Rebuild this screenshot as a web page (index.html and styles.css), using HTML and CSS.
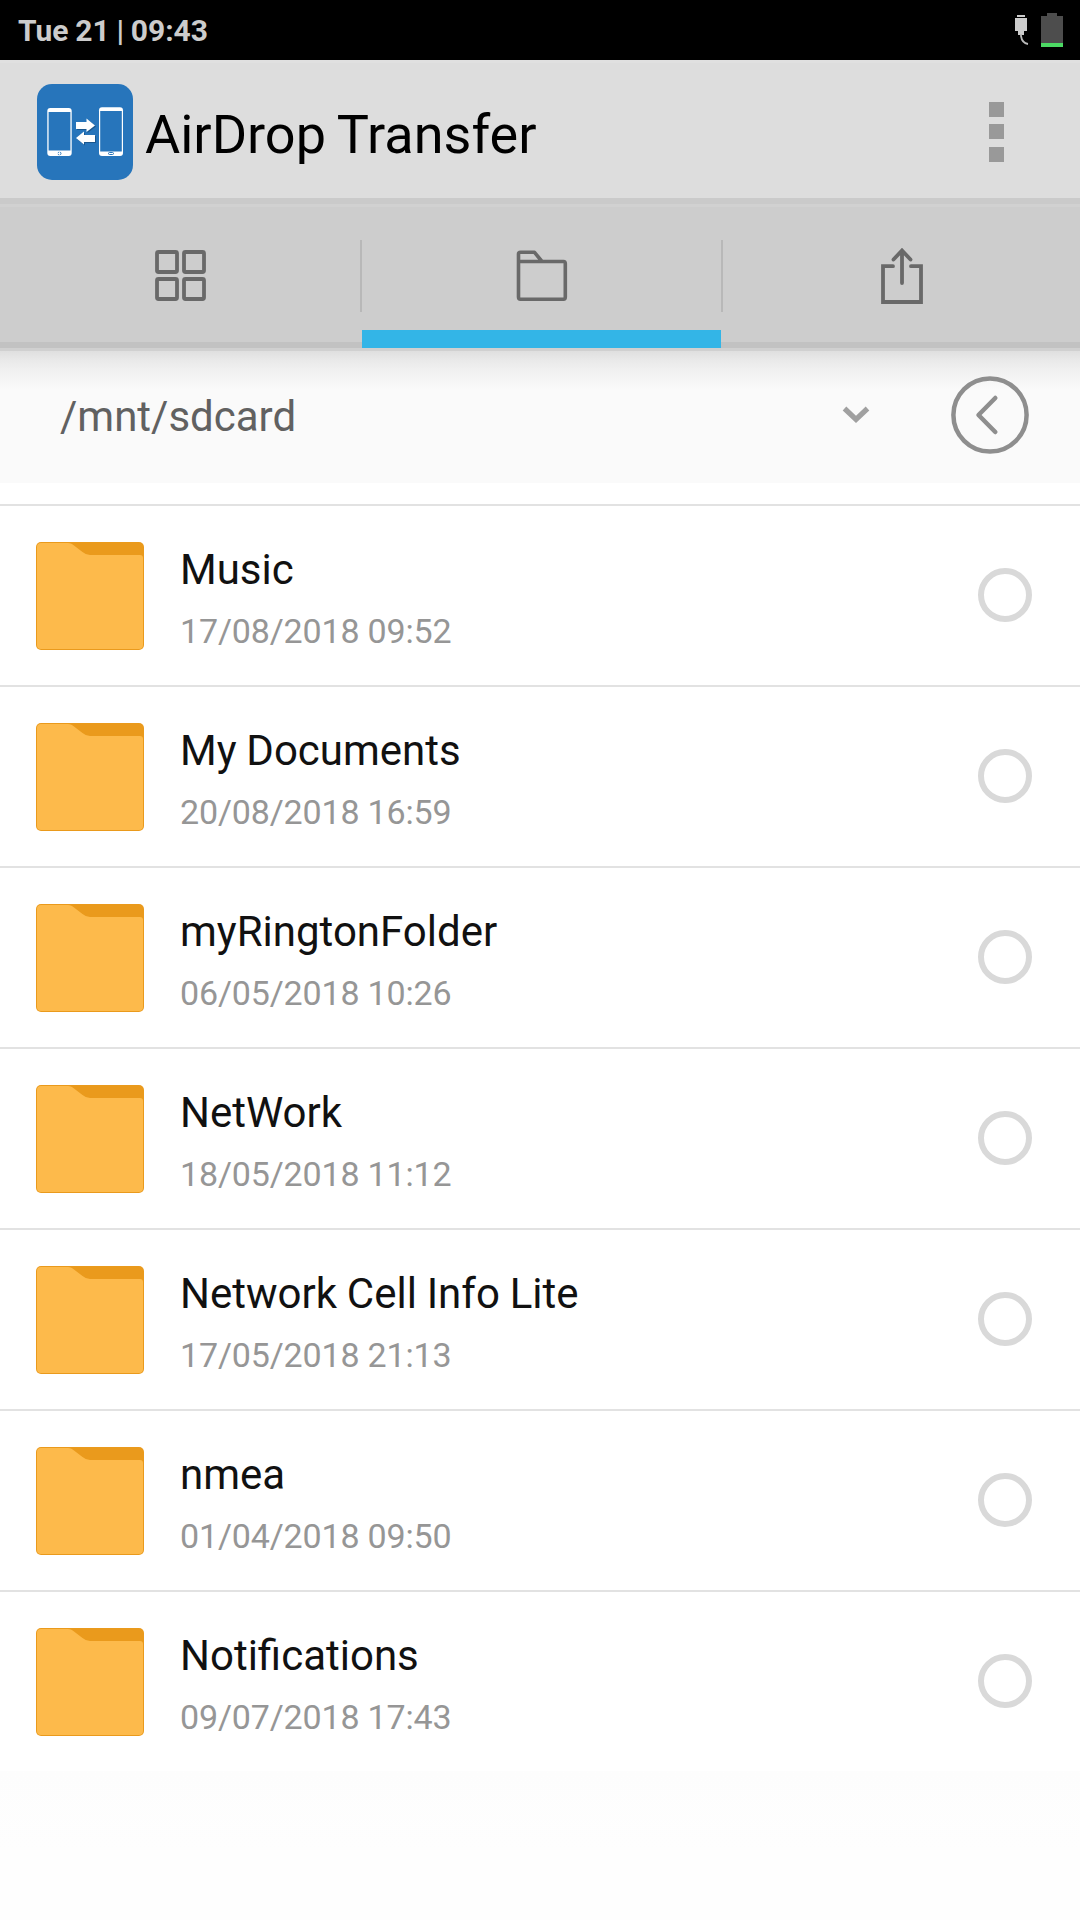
FILE: index.html
```
<!DOCTYPE html>
<html lang="en">
<head>
<meta charset="utf-8">
<title>AirDrop Transfer</title>
<link rel="stylesheet" href="styles.css">
</head>
<body>
<svg class="defs" width="0" height="0" aria-hidden="true">
  <symbol id="folder" viewBox="0 0 108 108">
    <rect width="108" height="108" rx="5" fill="#ea9a1c"/>
    <path d="M5 1H32C35 1 36 2 38 3.500L46.500 10Q50 13 54 13H104Q107 13 107 16V103Q107 107 103 107H5Q1 107 1 103V5Q1 1 5 1Z" fill="#fdba4b"/>
  </symbol>
</svg>
<div class="status">
  <span class="clock">Tue 21 | 09:43</span>
  <svg class="status-icons" width="48" height="34" viewBox="0 0 48 34">
    <path d="M2 2h8v2H2zM0 5h12v13H9v4H3v-4H0z" fill="#ccc"/>
    <path d="M6 21v2q1 7 7 8" fill="none" stroke="#bbb" stroke-width="1.800"/>
    <path d="M32 0h10v3h6v27H26V3h6z" fill="#4d4d4d"/>
    <path d="M26 30h22v4H26z" fill="#4cd964"/>
  </svg>
</div>
<header class="header">
  <svg class="logo" width="96" height="96" viewBox="0 0 96 96">
    <rect width="96" height="96" rx="15" fill="#2775bb"/>
    <rect x="10.300" y="24" width="24.400" height="48" rx="3" fill="#fff"/>
    <rect x="11.600" y="28" width="21.800" height="38.500" fill="#2775bb"/>
    <circle cx="22.500" cy="69.500" r="1.500" fill="none" stroke="#2775bb" stroke-dasharray="1.500 .8"/>
    <rect x="62" y="23.300" width="24" height="48.700" rx="3" fill="#fff"/>
    <rect x="63.200" y="27" width="21.600" height="40.500" fill="#2775bb"/>
    <rect x="71.500" y="68.500" width="5" height="2" rx="1" fill="none" stroke="#2775bb"/>
    <g fill="#174b7b" opacity=".7" transform="translate(1 1)"><path d="M39 38h10.500v-3.500L58 41.500l-8.500 6.500v-3H39z"/><path d="M58 51H47v-3.500L39 54l8 6.500V58h11z"/></g>
    <g fill="#fff"><path d="M39 38h10.500v-3.500L58 41.500l-8.500 6.500v-3H39z"/><path d="M58 51H47v-3.500L39 54l8 6.500V58h11z"/></g>
  </svg>
  <h1 class="app-name">AirDrop Transfer</h1>
  <svg class="overflow" width="15" height="60" viewBox="0 0 15 60" fill="#999"><path d="M0 0h15v15H0zM0 22h15v15H0zM0 45h15v15H0z"/></svg>
</header>
<nav class="tabs">
  <div class="tab tab-apps">
    <svg width="52" height="52" viewBox="0 0 52 52" fill="none" stroke="#696969" stroke-width="3.800"><rect x="2" y="2" width="20" height="20" rx="1.500"/><rect x="29" y="2" width="20" height="20" rx="1.500"/><rect x="2" y="29" width="20" height="20" rx="1.500"/><rect x="29" y="29" width="20" height="20" rx="1.500"/></svg>
  </div>
  <i class="divider"></i>
  <div class="tab tab-active">
    <svg width="52" height="52" viewBox="0 0 52 52" fill="none" stroke="#696969" stroke-width="3.600" stroke-linejoin="round"><path d="M2.500 11.500V4Q2.500 2.300 4.500 2.300H18.500L26 11.500M2.500 11.500H47.500Q49.300 11.500 49.300 13.500V47Q49.300 49.300 47.500 49.300H4.500Q2.500 49.300 2.500 47Z"/></svg>
  </div>
  <i class="divider"></i>
  <div class="tab">
    <svg width="42" height="56" viewBox="0 0 42 56" fill="none" stroke="#696969" stroke-width="3.800" stroke-linecap="round"><path d="M12 18.200H2V54H40V18.200H30M21 35V3M12.500 11.500L21 2.500L29.500 11.500"/></svg>
  </div>
</nav>
<div class="path-bar">
  <span class="path">/mnt/sdcard</span>
  <svg class="caret" width="28" height="18" viewBox="0 0 28 18" fill="none" stroke="#a0a0a0" stroke-width="5.200"><path d="M2.500 2.500L14 13.500L25.500 2.500"/></svg>
  <svg class="back" width="78" height="78" viewBox="0 0 78 78" fill="none" stroke="#8e8e8e" stroke-width="4.500" stroke-linecap="round" stroke-linejoin="round"><circle cx="39" cy="39" r="36.600"/><path d="M44.300 22L27.500 39L44.300 56"/></svg>
</div>
<ul class="list">
  <li class="row"><svg class="folder"><use href="#folder"/></svg><div class="info"><div class="name">Music</div><div class="date">17/08/2018 09:52</div></div><i class="radio"></i></li>
  <li class="row"><svg class="folder"><use href="#folder"/></svg><div class="info"><div class="name">My Documents</div><div class="date">20/08/2018 16:59</div></div><i class="radio"></i></li>
  <li class="row"><svg class="folder"><use href="#folder"/></svg><div class="info"><div class="name">myRingtonFolder</div><div class="date">06/05/2018 10:26</div></div><i class="radio"></i></li>
  <li class="row"><svg class="folder"><use href="#folder"/></svg><div class="info"><div class="name">NetWork</div><div class="date">18/05/2018 11:12</div></div><i class="radio"></i></li>
  <li class="row"><svg class="folder"><use href="#folder"/></svg><div class="info"><div class="name">Network Cell Info Lite</div><div class="date">17/05/2018 21:13</div></div><i class="radio"></i></li>
  <li class="row"><svg class="folder"><use href="#folder"/></svg><div class="info"><div class="name">nmea</div><div class="date">01/04/2018 09:50</div></div><i class="radio"></i></li>
  <li class="row"><svg class="folder"><use href="#folder"/></svg><div class="info"><div class="name">Notifications</div><div class="date">09/07/2018 17:43</div></div><i class="radio"></i></li>
</ul>
<div class="footer-fill"></div>
</body>
</html>
```
FILE: styles.css
```
* { box-sizing: border-box; }
body {
  margin: 0;
  width: 1080px;
  height: 1920px;
  overflow: hidden;
  display: flex;
  flex-direction: column;
  background: #fefefe;
  font-family: Roboto, sans-serif;
}
svg { display: block; flex: none; }
.defs { position: absolute; }
.status {
  height: 60px;
  padding: 0 17px 0 18px;
  display: flex;
  justify-content: space-between;
  background: #000;
}
.clock { font-size: 30px; line-height: 61px; font-weight: 700; word-spacing: -0.7px; color: #ccc; }
.status-icons { margin-top: 13px; }
.header {
  height: 138px;
  padding: 21px 76px 0 37px;
  display: flex;
  align-items: flex-start;
  border-top: 3px solid #e0e0e0;
  background: #ddd;
}
.app-name { margin: 21px 0 0 12px; font-size: 54px; line-height: 60px; font-weight: 400; word-spacing: -1.5px; color: #000; }
.overflow { margin: 18px 0 0 auto; }
.tabs {
  height: 153px;
  display: flex;
  background: linear-gradient(#cacaca 6px, #d1d1d1 6px 9px, #cdcdcd 9px 144px, #c2c2c2 144px 150px, #d0d0d0 150px);
}
.tab {
  flex: none;
  width: 360px;
  height: 150px;
  padding-top: 5px;
  display: flex;
  align-items: center;
  justify-content: center;
}
.tab-apps { padding-left: 2px; }
.tab:last-child { width: 357px; padding-top: 6px; }
.tab-active { width: 359px; padding-top: 23px; border-bottom: 18px solid #33b5e7; }
.divider { width: 2px; height: 72px; margin-top: 42px; background: #b8b8b8; }
.path-bar {
  height: 132px;
  padding: 0 51px 4px 60px;
  display: flex;
  align-items: center;
  background: linear-gradient(#dfdfdf, #e9e9e9 9px, #f1f1f1 20px, #fafafa 38px);
}
.path { margin-top: 4px; font-size: 42px; line-height: 50px; color: #616161; }
.caret { margin-left: auto; }
.back { margin-left: 81px; }
.list { margin: 0; padding: 21px 0 0; list-style: none; background: #fff; }
.row {
  height: 181px;
  padding: 0 48px 0 36px;
  display: flex;
  align-items: center;
  border-top: 2px solid #e2e2e2;
}
.folder { width: 108px; height: 108px; margin-top: 1px; }
.info { flex: 1; margin: 5px 0 0 36px; }
.name { font-size: 42px; line-height: 50px; word-spacing: -0.6px; color: #111; }
.date { margin-top: 16px; font-size: 34px; line-height: 40px; letter-spacing: -0.16px; color: #969696; }
.radio { width: 54px; height: 54px; margin-top: -1px; border: 6px solid #d9d9d9; border-radius: 50%; }
.footer-fill { flex: 1; background: linear-gradient(#fdfdfd, #fefefe 80px); }
```
